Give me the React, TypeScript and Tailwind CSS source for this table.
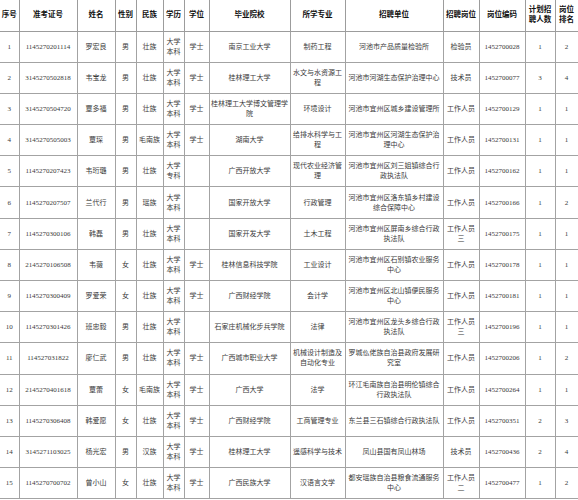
import React from "react";

const COLS = [19, 58, 38, 21, 27, 21, 25, 81, 55, 98, 36, 46, 30, 23];

const HEAD = [
  "序号",
  "准考证号",
  "姓名",
  "性别",
  "民族",
  "学历",
  "学位",
  "毕业院校",
  "所学专业",
  "招聘单位",
  "招聘岗位",
  "岗位编码",
  "计划招|聘人数",
  "岗位|排名",
];

// "|" marks a forced line break, as in the spreadsheet
const ROWS: string[][] = [
  ["1", "1145270201114", "罗宏良", "男", "壮族", "大学|本科", "学士", "南京工业大学", "制药工程", "河池市产品质量检验所", "检验员", "1452700028", "1", "2"],
  ["2", "3145270502818", "韦宝龙", "男", "壮族", "大学|本科", "学士", "桂林理工大学", "水文与水资源工|程", "河池市河湖生态保护治理中心", "技术员", "1452700077", "3", "4"],
  ["3", "3145270504720", "覃多福", "男", "壮族", "大学|本科", "学士", "桂林理工大学博文管理学|院", "环境设计", "河池市宜州区城乡建设管理所", "工作人员", "1452700129", "1", "1"],
  ["4", "3145270505003", "覃琛", "男", "毛南族", "大学|本科", "学士", "湖南大学", "给排水科学与工|程", "河池市宜州区河湖生态保护治|理中心", "工作人员", "1452700131", "1", "1"],
  ["5", "1145270207423", "韦珩璐", "男", "壮族", "大学|专科", "", "广西开放大学", "现代农业经济管|理", "河池市宜州区刘三姐镇综合行|政执法队", "工作人员", "1452700162", "1", "1"],
  ["6", "1145270207507", "兰代行", "男", "瑶族", "大学|本科", "", "国家开放大学", "行政管理", "河池市宜州区洛东镇乡村建设|综合保障中心", "工作人员", "1452700166", "1", "2"],
  ["7", "1145270300106", "韩磊", "男", "壮族", "大学|本科", "", "国家开发大学", "土木工程", "河池市宜州区屏南乡综合行政|执法队", "工作人员|三", "1452700175", "1", "1"],
  ["8", "2145270106508", "韦薇", "女", "壮族", "大学|本科", "学士", "桂林信息科技学院", "工业设计", "河池市宜州区石别镇农业服务|中心", "工作人员", "1452700178", "1", "1"],
  ["9", "1145270300409", "罗爱荣", "女", "壮族", "大学|本科", "学士", "广西财经学院", "会计学", "河池市宜州区北山镇便民服务|中心", "工作人员", "1452700181", "1", "1"],
  ["10", "1145270301426", "班忠毅", "男", "壮族", "大学|本科", "", "石家庄机械化步兵学院", "法律", "河池市宜州区龙头乡综合行政|执法队", "工作人员|三", "1452700196", "1", "1"],
  ["11", "114527031822", "廖仁武", "男", "壮族", "大学|本科", "学士", "广西城市职业大学", "机械设计制造及|自动化专业", "罗城仫佬族自治县政府发展研|究室", "工作人员", "1452700206", "1", "2"],
  ["12", "2145270401618", "覃蕾", "女", "毛南族", "大学|本科", "学士", "广西大学", "法学", "环江毛南族自治县明伦镇综合|行政执法队", "工作人员", "1452700264", "1", "1"],
  ["13", "1145270306408", "韩爱愿", "女", "壮族", "大学|本科", "学士", "广西财经学院", "工商管理专业", "东兰县三石镇综合行政执法队", "工作人员", "1452700351", "2", "3"],
  ["14", "3145271103025", "杨光宏", "男", "汉族", "大学|本科", "学士", "桂林理工大学", "遥感科学与技术", "凤山县国有凤山林场", "技术员", "1452700436", "2", "4"],
  ["15", "1145270700702", "曾小山", "女", "壮族", "大学|本科", "学士", "广西民族大学", "汉语言文学", "都安瑶族自治县粮食流通服务|中心", "工作人员|二", "1452700477", "1", "2"],
];

function Lines({ text }: { text: string }) {
  const parts = text.split("|");
  return (
    <>
      {parts.map((p, i) => (
        <span key={i} className="block whitespace-nowrap">
          {p}
        </span>
      ))}
    </>
  );
}

export default function App() {
  return (
    <div className="w-[578px] h-[500px] overflow-hidden bg-white">
      <table
        className="w-[578px] table-fixed border-collapse text-[7px] leading-[10px] text-[#3a3a3a]"
        style={{ fontFamily: '"Liberation Serif", "Noto Sans CJK SC", serif' }}
      >
        <colgroup>
          {COLS.map((w, i) => (
            <col key={i} style={{ width: w }} />
          ))}
        </colgroup>
        <thead>
          <tr className="h-[31px]">
            {HEAD.map((h, i) => (
              <th
                key={i}
                className="border-r border-b border-[#9c9c9c] p-0 text-center align-middle font-bold text-[7.5px] leading-[10px] text-[#111]"
              >
                <Lines text={h} />
              </th>
            ))}
          </tr>
        </thead>
        <tbody>
          {ROWS.map((r, ri) => (
            <tr key={ri} className="h-[31.2px]">
              {r.map((c, ci) => (
                <td
                  key={ci}
                  className="border-r border-b border-[#a3a3a3] p-0 text-center align-middle"
                >
                  <Lines text={c} />
                </td>
              ))}
            </tr>
          ))}
        </tbody>
      </table>
    </div>
  );
}
